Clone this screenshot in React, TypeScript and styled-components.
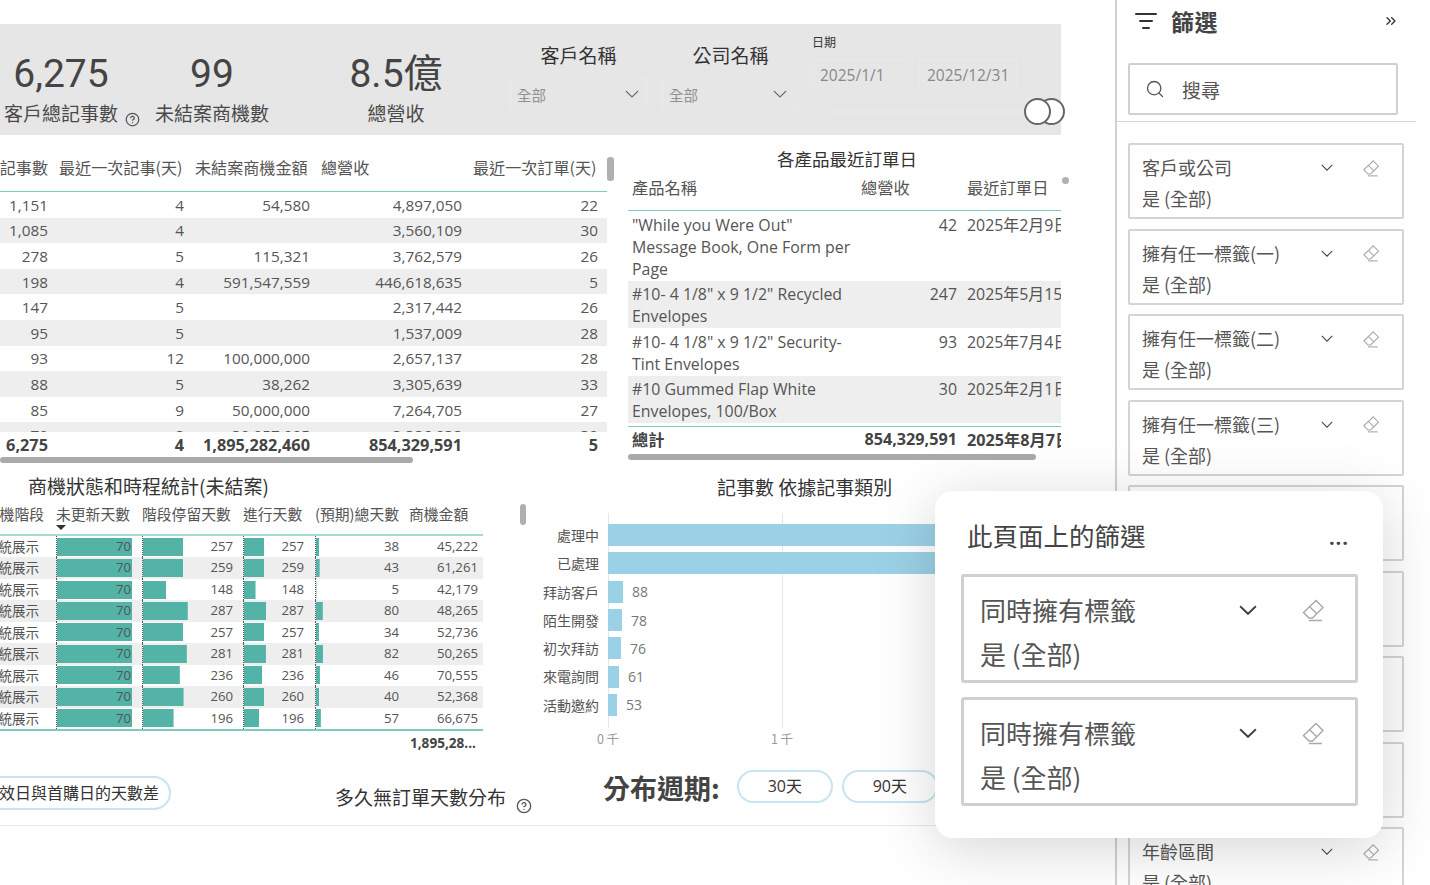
import React, {FC} from 'react';
import styled, {createGlobalStyle} from 'styled-components';
import {ChevronsRight, CircleHelp, ListFilter, Search} from 'lucide-react';

const FONT = '"Open Sans", "Noto Sans CJK TC", sans-serif';
const CJK = '"Noto Sans CJK TC", "Noto Sans", sans-serif';

const GlobalStyle = createGlobalStyle`
  html, body {
    margin: 0;
    height: 100%;
    background: #fff;
    overflow: hidden;
  }
  * { box-sizing: border-box; }
  #root { height: 100%; }
`;

const Page = styled.div`
  position: relative;
  width: 1430px;
  height: 885px;
  display: flex;
  overflow: hidden;
  font-family: ${FONT};
  color: #555;
`;
const Main = styled.main`
  width: 1115px;
  flex-shrink: 0;
  padding-top: 24px;
  overflow: hidden;
`;

/* top band */
const Band = styled.section`
  width: 1061px;
  height: 111px;
  background: #e6e6e6;
  display: grid;
  grid-template-columns: 122px 180px 208px 152px 149px 1fr;
`;
const Kpi = styled.div`
  padding: 26px ${p => p.$pad || 0}px 0 0;
  text-align: center;
  white-space: nowrap;
`;
const KpiValue = styled.div`
  font-family: Roboto, ${CJK};
  font-size: 39px;
  line-height: 48px;
  color: #444;
`;
const KpiLabel = styled.div`
  position: relative;
  margin-top: 1px;
  font-family: ${CJK};
  font-size: 19px;
  line-height: 28px;
  color: #4a4a4a;
`;
const HelpIcon = styled(CircleHelp)`
  color: #555;
`;
const KpiHelp = styled.span`
  position: absolute;
  left: 125px;
  top: 13px;
  display: flex;
`;
const Slicer = styled.div`
  padding-top: 18px;
`;
const SlicerLabel = styled.div`
  width: 137px;
  text-align: center;
  font-family: ${CJK};
  font-size: 19px;
  line-height: 26px;
  color: #333;
`;
const Dropdown = styled.div`
  width: ${p => p.$width}px;
  height: 32px;
  margin-top: 10px;
  padding: 0 7px 0 6px;
  display: flex;
  justify-content: space-between;
  align-items: center;
  border: 1px solid #e9e9e9;
  font-family: ${CJK};
  font-size: 14.5px;
  color: #8f8f8f;
`;
const DateSlicer = styled.div`
  padding: 10px 0 0 1px;
`;
const DateLabel = styled.div`
  font-family: ${CJK};
  font-size: 12px;
  line-height: 16px;
  color: #333;
`;
const DateRow = styled.div`
  display: flex;
  gap: 9px;
  margin-top: 9px;
`;
const DateBox = styled.div`
  width: 98px;
  height: 32px;
  padding-left: 7px;
  display: flex;
  align-items: center;
  border: 1px solid #e9e9e9;
  font-size: 15.5px;
  color: #888;
`;
const SliderTrack = styled.div`
  position: relative;
  width: 216px;
  height: 2px;
  margin: 20px 0 0 18px;
  background: #e9e9e9;
`;
const SliderHandle = styled.span`
  position: absolute;
  left: ${p => p.$left}px;
  top: -13px;
  width: 27px;
  height: 27px;
  border-radius: 50%;
  border: 2px solid #666;
  background: #fff;
`;

/* tables row */
const TablesRow = styled.section`
  height: 330px;
  display: flex;
  gap: 12px;
`;
const LeftTable = styled.div`
  position: relative;
  width: 616px;
`;
const RightTable = styled.div`
  position: relative;
  width: 433px;
`;
const Grid = styled.div`
  display: grid;
  grid-template-columns: 48px 136px 126px 152px 136px 8px;
`;
const HeadGrid = styled(Grid)`
  height: 57px;
  width: 607px;
  align-items: end;
  padding-bottom: 12px;
  border-bottom: 1.5px solid #7fccc2;
`;
const HeadCell = styled.div`
  display: flex;
  justify-content: ${p => (p.$clip ? 'flex-end' : 'flex-start')};
  padding-left: ${p => (p.$clip ? 0 : 11)}px;
  overflow: hidden;
  white-space: nowrap;
  font-family: ${CJK};
  font-size: 16.1px;
  line-height: 24px;
  color: #555;
`;
const TableBody = styled.div`
  height: 240px;
  width: 607px;
  overflow: hidden;
`;
const DataRow = styled(Grid)`
  height: 25.6px;
  align-items: center;
  background: ${p => (p.$striped ? '#eeeeee' : '#fff')};
`;
const NumCell = styled.div`
  text-align: right;
  font-size: 15.3px;
  color: #555;
  white-space: nowrap;
`;
const TotalGrid = styled(Grid)`
  height: 25px;
  align-items: center;
`;
const TotalCell = styled(NumCell)`
  font-size: 16.3px;
  font-weight: 700;
  color: #444;
`;
const HBar = styled.div`
  width: ${p => p.$width}px;
  height: 6px;
  border-radius: 3px;
  background: #aaa;
`;
const VBar = styled.div`
  position: absolute;
  left: ${p => p.$left}px;
  top: ${p => p.$top}px;
  width: ${p => p.$w}px;
  height: ${p => p.$h}px;
  border-radius: 3px;
  background: #b0b0b0;
`;
const ProductTitle = styled.div`
  padding-top: 12px;
  padding-left: 149px;
  font-family: ${CJK};
  font-size: 17.5px;
  line-height: 24px;
  color: #333;
`;
const ProductGrid = styled.div`
  display: grid;
  grid-template-columns: 229px 96px 1fr;
  padding-left: 4px;
`;
const ProductHead = styled(ProductGrid)`
  height: 40px;
  padding-top: 4px;
  border-bottom: 1.5px solid #7fccc2;
  font-family: ${CJK};
  font-size: 16.3px;
  line-height: 24px;
`;
const ProductHeadDate = styled.div`
  padding-left: 10px;
`;
const ProductRow = styled(ProductGrid)`
  padding-top: 2.5px;
  padding-bottom: 1px;
  background: ${p => (p.$striped ? '#eeeeee' : '#fff')};
  font-size: 15.9px;
  line-height: 22px;
`;
const ProductName = styled.div`
  padding-right: 10px;
`;
const ProductNum = styled.div`
  text-align: right;
`;
const ProductDate = styled.div`
  padding-left: 10px;
  overflow: hidden;
  white-space: nowrap;
`;
const ProductTotal = styled(ProductGrid)`
  height: 28px;
  margin-top: 3px;
  padding-bottom: 3px;
  align-items: center;
  border-top: 1.5px solid #7fccc2;
  font-size: 16.2px;
  font-weight: 700;
  color: #444;
`;
const Dot = styled.span`
  position: absolute;
  left: 434px;
  top: 42px;
  width: 7px;
  height: 7px;
  border-radius: 50%;
  background: #b0b0b0;
`;

/* matrix + chart */
const MiddleRow = styled.section`
  height: 305px;
  display: flex;
`;
const Matrix = styled.div`
  position: relative;
  flex-shrink: 0;
  width: 530px;
  padding-top: 8px;
`;
const MatrixTitle = styled.div`
  padding-left: 28px;
  font-family: ${CJK};
  font-size: 19px;
  line-height: 25px;
  color: #333;
`;
const MatrixGrid = styled.div`
  display: grid;
  width: 483px;
  grid-template-columns: 56px 86px 101px 72px 94px 74px;
`;
const MatrixHead = styled(MatrixGrid)`
  position: relative;
  height: 38px;
  border-bottom: 2px solid #a5dcd3;
  font-family: ${CJK};
  font-size: 14.8px;
  line-height: 32px;
  white-space: nowrap;
`;
const MatrixFirstHead = styled.div`
  display: flex;
  justify-content: flex-end;
  padding-right: 12px;
  overflow: hidden;
`;
const SortCaret = styled.span`
  position: absolute;
  left: 56px;
  top: 27px;
  border-left: 5px solid transparent;
  border-right: 5px solid transparent;
  border-top: 5px solid #333;
`;
const MatrixRow = styled(MatrixGrid)`
  height: 21.45px;
  align-items: stretch;
  background: ${p => (p.$striped ? '#eeeeee' : '#fff')};
  font-size: 13.2px;
  line-height: 21px;
`;
const StageCell = styled.div`
  display: flex;
  justify-content: flex-end;
  padding-right: 17px;
  overflow: hidden;
  white-space: nowrap;
  font-family: ${CJK};
  font-size: 13.5px;
`;
const BarCell = styled.div`
  padding-right: ${p => p.$pad}px;
  text-align: right;
  border-left: 1px dotted #555;
  background: linear-gradient(#52b3a6, #52b3a6) no-repeat 0 center;
`;
const AmountCell = styled.div`
  padding-right: 5px;
  text-align: right;
`;
const MatrixBottom = styled.div`
  width: 483px;
  height: 25px;
  padding-right: 7px;
  border-top: 2px solid #7accc0;
  text-align: right;
  font-size: 13.6px;
  font-weight: 700;
  line-height: 24px;
  color: #444;
`;
const Chart = styled.div`
  flex: 1;
  min-width: 0;
  padding-top: 9px;
`;
const ChartTitle = styled.div`
  padding-left: 187px;
  font-family: ${CJK};
  font-size: 19px;
  line-height: 26px;
  color: #333;
`;
const ChartBody = styled.div`
  display: grid;
  grid-template-columns: 78px 1fr;
  margin-top: 13px;
  height: 215px;
`;
const ChartLabels = styled.div`
  padding-top: 8px;
`;
const ChartLabel = styled.div`
  height: 28.3px;
  padding-right: 9px;
  text-align: right;
  font-family: ${CJK};
  font-size: 14px;
  line-height: 28px;
  color: #555;
`;
const Plot = styled.div`
  padding-top: 8px;
  background:
    linear-gradient(#e6e6e6, #e6e6e6) no-repeat 0 0 / 1px 100%,
    linear-gradient(#e6e6e6, #e6e6e6) no-repeat 174px 0 / 1px 100%;
`;
const PlotRow = styled.div`
  height: 28.3px;
  display: flex;
  align-items: center;
  gap: 9px;
  white-space: nowrap;
`;
const PlotBar = styled.div`
  height: 22px;
  background: #9bd1e6;
  flex-shrink: 0;
`;
const PlotValue = styled.span`
  font-size: 14px;
  color: #777;
`;
const Axis = styled.div`
  display: flex;
  gap: 150px;
  padding: 2px 0 0 66px;
`;
const Tick = styled.span`
  width: 24px;
  text-align: center;
  font-family: ${CJK};
  font-size: 12.5px;
  line-height: 18px;
  color: #999;
`;

/* bottom controls */
const BottomRow = styled.section`
  height: 56px;
  display: flex;
  align-items: flex-start;
  border-bottom: 1px solid #e8e8e8;
`;
const Pill = styled.div`
  width: 231px;
  height: 34px;
  margin: 6px 0 0 -60px;
  padding-right: 10px;
  border: 2px solid #c6e4f2;
  border-radius: 17px;
  text-align: right;
  white-space: nowrap;
  font-family: ${CJK};
  font-size: 16px;
  line-height: 29px;
  color: #333;
`;
const BottomTitle = styled.div`
  margin: 14px 0 0 164px;
  font-family: ${CJK};
  font-size: 19px;
  line-height: 26px;
  color: #333;
  white-space: nowrap;
`;
const BottomHelp = styled.span`
  display: flex;
  margin: 28px 0 0 10px;
`;
const PeriodLabel = styled.div`
  margin: 0 17px 0 71px;
  font-family: ${CJK};
  font-size: 27px;
  font-weight: 700;
  line-height: 36px;
  color: #444;
  white-space: nowrap;
`;
const PeriodButton = styled.div`
  width: 96px;
  height: 33px;
  margin-right: 9px;
  border: 2px solid #c6e4f2;
  border-radius: 17px;
  text-align: center;
  font-family: ${FONT};
  font-size: 16px;
  line-height: 29px;
  color: #333;
  flex-shrink: 0;
`;

/* filter pane */
const Pane = styled.aside`
  width: 301px;
  height: 885px;
  flex-shrink: 0;
  border-left: 2px solid #d0d0d0;
  overflow: hidden;
`;
const PaneTop = styled.div`
  height: 122px;
  padding-left: 11px;
  border-bottom: 1.5px solid #d4d4d4;
`;
const PaneHeader = styled.div`
  width: 271px;
  height: 42px;
  padding-left: 6px;
  display: flex;
  align-items: center;
  color: #333;
`;
const PaneTitle = styled.h2`
  flex: 1;
  margin: 0 0 0 13px;
  font-family: ${CJK};
  font-size: 23px;
  font-weight: 700;
  letter-spacing: .5px;
  color: #444;
`;
const SearchBox = styled.div`
  width: 270px;
  height: 52px;
  margin-top: 21px;
  padding-left: 15px;
  display: flex;
  align-items: center;
  gap: 17px;
  border: 2px solid #d0d0d0;
  border-radius: 2px;
  font-family: ${CJK};
  font-size: 19px;
  color: #555;
`;
const CardList = styled.div`
  display: flex;
  flex-direction: column;
  gap: 9.5px;
  padding: 21px 0 0 11px;
`;
const FilterCard = styled.div`
  flex-shrink: 0;
  width: 276px;
  height: 76px;
  padding: 7px 22px 0 12px;
  border: 2px solid #d4d4d4;
  border-radius: 2px;
  font-family: ${CJK};
  font-size: 18px;
  line-height: 31px;
  color: #555;
  white-space: nowrap;
`;
const CardHead = styled.div`
  display: flex;
  align-items: center;
  gap: 29px;
  min-height: 31px;
`;
const CardName = styled.div`
  flex: 1;
`;

/* floating panel */
const Popover = styled.div`
  position: absolute;
  left: 935px;
  top: 491px;
  width: 448px;
  height: 347px;
  padding: 26px 25px 0 26px;
  border-radius: 18px;
  background: #fff;
  box-shadow: 0 10px 60px rgba(0, 0, 0, .17);
`;
const PopoverHead = styled.div`
  display: flex;
  justify-content: space-between;
  align-items: center;
  padding: 0 9px 0 6px;
  height: 36px;
`;
const PopoverTitle = styled.div`
  font-family: ${CJK};
  font-size: 25.5px;
  line-height: 36px;
  color: #444;
`;
const MoreDots = styled.span`
  margin-top: 5px;
  font-size: 20px;
  font-weight: 700;
  line-height: 1;
  letter-spacing: 1px;
  color: #444;
`;
const PopoverCards = styled.div`
  margin-top: 21px;
  display: flex;
  flex-direction: column;
  gap: 14px;
`;
const PopoverCard = styled.div`
  height: 109px;
  padding: 11px 30px 0 16px;
  border: 3px solid #d0d0d0;
  border-radius: 3px;
  font-family: ${CJK};
  font-size: 26px;
  line-height: 44px;
  color: #555;
`;
const PopoverCardHead = styled.div`
  display: flex;
  align-items: center;
  gap: 44px;
`;

type ChevronProps = {width: number, height: number, color: string, weight?: number};

const Chevron: FC<ChevronProps> = ({width, height, color, weight = 1.5}) => (
  <svg width={width} height={height} viewBox="0 0 16 8" fill="none" preserveAspectRatio="none">
    <path d="M1 1 8 7 15 1" stroke={color} strokeWidth={weight} />
  </svg>
);

const Eraser: FC<{size: number}> = ({size}) => (
  <svg width={size} height={size} viewBox="0 0 24 24" fill="none" stroke="#aaa" strokeWidth="1.5">
    <path d="M15 2.5 22 9.5 11.5 20H8L2.5 14.5z" />
    <path d="M8.5 8.5 15.5 15.5" />
    <path d="M8 22.5h13" />
  </svg>
);

const topRows = [
  ['1,151', '4', '54,580', '4,897,050', '22'],
  ['1,085', '4', '', '3,560,109', '30'],
  ['278', '5', '115,321', '3,762,579', '26'],
  ['198', '4', '591,547,559', '446,618,635', '5'],
  ['147', '5', '', '2,317,442', '26'],
  ['95', '5', '', '1,537,009', '28'],
  ['93', '12', '100,000,000', '2,657,137', '28'],
  ['88', '5', '38,262', '3,305,639', '33'],
  ['85', '9', '50,000,000', '7,264,705', '27'],
  ['79', '8', '30,057,005', '3,386,938', '30'],
];

const products = [
  {name: '"While you Were Out" Message Book, One Form per Page', value: '42', date: '2025年2月9日'},
  {name: '#10- 4 1/8" x 9 1/2" Recycled Envelopes', value: '247', date: '2025年5月15日'},
  {name: '#10- 4 1/8" x 9 1/2" Security-Tint Envelopes', value: '93', date: '2025年7月4日'},
  {name: '#10 Gummed Flap White Envelopes, 100/Box', value: '30', date: '2025年2月1日'},
];

const deals = [
  [257, 257, 38, '45,222'],
  [259, 259, 43, '61,261'],
  [148, 148, 5, '42,179'],
  [287, 287, 80, '48,265'],
  [257, 257, 34, '52,736'],
  [281, 281, 82, '50,265'],
  [236, 236, 46, '70,555'],
  [260, 260, 40, '52,368'],
  [196, 196, 57, '66,675'],
] as [number, number, number, string][];

const categories = [
  {label: '處理中', width: 520},
  {label: '已處理', width: 520},
  {label: '拜訪客戶', width: 15, value: 88},
  {label: '陌生開發', width: 14, value: 78},
  {label: '初次拜訪', width: 13, value: 76},
  {label: '來電詢問', width: 11, value: 61},
  {label: '活動邀約', width: 9, value: 53},
];

const paneCards = ['客戶或公司', '擁有任一標籤(一)', '擁有任一標籤(二)', '擁有任一標籤(三)', '', '', '', '', '年齡區間'];

const bar = (width: number) => ({backgroundSize: `${width}px 18px`});

export default function App() {
  return (
    <Page>
      <GlobalStyle />
      <Main>
        <Band>
          <Kpi>
            <KpiValue>6,275</KpiValue>
            <KpiLabel>
              客戶總記事數
              <KpiHelp><HelpIcon size={15} /></KpiHelp>
            </KpiLabel>
          </Kpi>
          <Kpi>
            <KpiValue>99</KpiValue>
            <KpiLabel>未結案商機數</KpiLabel>
          </Kpi>
          <Kpi $pad={20}>
            <KpiValue>8.5億</KpiValue>
            <KpiLabel>總營收</KpiLabel>
          </Kpi>
          <Slicer>
            <SlicerLabel>客戶名稱</SlicerLabel>
            <Dropdown $width={137}>全部<Chevron width={14} height={8} color="#666" weight={1.1} /></Dropdown>
          </Slicer>
          <Slicer>
            <SlicerLabel>公司名稱</SlicerLabel>
            <Dropdown $width={133}>全部<Chevron width={14} height={8} color="#666" weight={1.1} /></Dropdown>
          </Slicer>
          <DateSlicer>
            <DateLabel>日期</DateLabel>
            <DateRow>
              <DateBox>2025/1/1</DateBox>
              <DateBox>2025/12/31</DateBox>
            </DateRow>
            <SliderTrack>
              <SliderHandle $left={208} />
              <SliderHandle $left={194} />
            </SliderTrack>
          </DateSlicer>
        </Band>

        <TablesRow>
          <LeftTable>
            <HeadGrid>
              <HeadCell $clip>客戶總記事數</HeadCell>
              <HeadCell>最近一次記事(天)</HeadCell>
              <HeadCell>未結案商機金額</HeadCell>
              <HeadCell>總營收</HeadCell>
              <HeadCell>最近一次訂單(天)</HeadCell>
            </HeadGrid>
            <VBar $left={607} $top={22} $w={7} $h={24} />
            <TableBody>
              {topRows.map((row, i) => (
                <DataRow key={i} $striped={i % 2 === 1}>
                  {row.map((cell, j) => <NumCell key={j}>{cell}</NumCell>)}
                </DataRow>
              ))}
            </TableBody>
            <TotalGrid>
              <TotalCell>6,275</TotalCell>
              <TotalCell>4</TotalCell>
              <TotalCell>1,895,282,460</TotalCell>
              <TotalCell>854,329,591</TotalCell>
              <TotalCell>5</TotalCell>
            </TotalGrid>
            <HBar $width={413} />
          </LeftTable>

          <RightTable>
            <ProductTitle>各產品最近訂單日</ProductTitle>
            <ProductHead>
              <div>產品名稱</div>
              <div>總營收</div>
              <ProductHeadDate>最近訂單日</ProductHeadDate>
            </ProductHead>
            <Dot />
            {products.map((p, i) => (
              <ProductRow key={i} $striped={i % 2 === 1}>
                <ProductName>{p.name}</ProductName>
                <ProductNum>{p.value}</ProductNum>
                <ProductDate>{p.date}</ProductDate>
              </ProductRow>
            ))}
            <ProductTotal>
              <div>總計</div>
              <ProductNum>854,329,591</ProductNum>
              <ProductDate>2025年8月7日</ProductDate>
            </ProductTotal>
            <HBar $width={408} />
          </RightTable>
        </TablesRow>

        <MiddleRow>
          <Matrix>
            <MatrixTitle>商機狀態和時程統計(未結案)</MatrixTitle>
            <MatrixHead>
              <MatrixFirstHead>商機階段</MatrixFirstHead>
              <div>未更新天數</div>
              <div>階段停留天數</div>
              <div>進行天數</div>
              <div>(預期)總天數</div>
              <div>商機金額</div>
              <SortCaret />
            </MatrixHead>
            <VBar $left={520} $top={39} $w={6} $h={21} />
            {deals.map(([stay, run, total, amount], i) => (
              <MatrixRow key={i} $striped={i % 2 === 1}>
                <StageCell>系統展示</StageCell>
                <BarCell $pad={11} style={bar(75)}>70</BarCell>
                <BarCell $pad={10} style={bar(stay * 0.156)}>{stay}</BarCell>
                <BarCell $pad={11} style={bar(run * 0.078)}>{run}</BarCell>
                <BarCell $pad={10} style={bar(total * 0.085)}>{total}</BarCell>
                <AmountCell>{amount}</AmountCell>
              </MatrixRow>
            ))}
            <MatrixBottom>1,895,28...</MatrixBottom>
          </Matrix>
          <Chart>
            <ChartTitle>記事數 依據記事類別</ChartTitle>
            <ChartBody>
              <ChartLabels>
                {categories.map(c => <ChartLabel key={c.label}>{c.label}</ChartLabel>)}
              </ChartLabels>
              <Plot>
                {categories.map(c => (
                  <PlotRow key={c.label}>
                    <PlotBar style={{width: c.width}} />
                    {c.value && <PlotValue>{c.value}</PlotValue>}
                  </PlotRow>
                ))}
              </Plot>
            </ChartBody>
            <Axis>
              <Tick>0 千</Tick>
              <Tick>1 千</Tick>
            </Axis>
          </Chart>
        </MiddleRow>

        <BottomRow>
          <Pill>生效日與首購日的天數差</Pill>
          <BottomTitle>多久無訂單天數分布</BottomTitle>
          <BottomHelp><HelpIcon size={16} /></BottomHelp>
          <PeriodLabel>分布週期:</PeriodLabel>
          <PeriodButton>30天</PeriodButton>
          <PeriodButton>90天</PeriodButton>
        </BottomRow>
      </Main>

      <Pane>
        <PaneTop>
          <PaneHeader>
            <ListFilter size={24} strokeWidth={2} />
            <PaneTitle>篩選</PaneTitle>
            <ChevronsRight size={16} strokeWidth={2} />
          </PaneHeader>
          <SearchBox>
            <Search size={20} strokeWidth={1.6} />
            搜尋
          </SearchBox>
        </PaneTop>
        <CardList>
          {paneCards.map((name, i) => (
            <FilterCard key={i}>
              <CardHead>
                <CardName>{name}</CardName>
                {name && <Chevron width={12} height={7} color="#444" />}
                {name && <Eraser size={18} />}
              </CardHead>
              {name && <div>是 (全部)</div>}
            </FilterCard>
          ))}
        </CardList>
      </Pane>

      <Popover>
        <PopoverHead>
          <PopoverTitle>此頁面上的篩選</PopoverTitle>
          <MoreDots>...</MoreDots>
        </PopoverHead>
        <PopoverCards>
          {[0, 1].map(i => (
            <PopoverCard key={i}>
              <PopoverCardHead>
                <CardName>同時擁有標籤</CardName>
                <Chevron width={18} height={10} color="#444" weight={1.8} />
                <Eraser size={24} />
              </PopoverCardHead>
              <div>是 (全部)</div>
            </PopoverCard>
          ))}
        </PopoverCards>
      </Popover>
    </Page>
  );
}
